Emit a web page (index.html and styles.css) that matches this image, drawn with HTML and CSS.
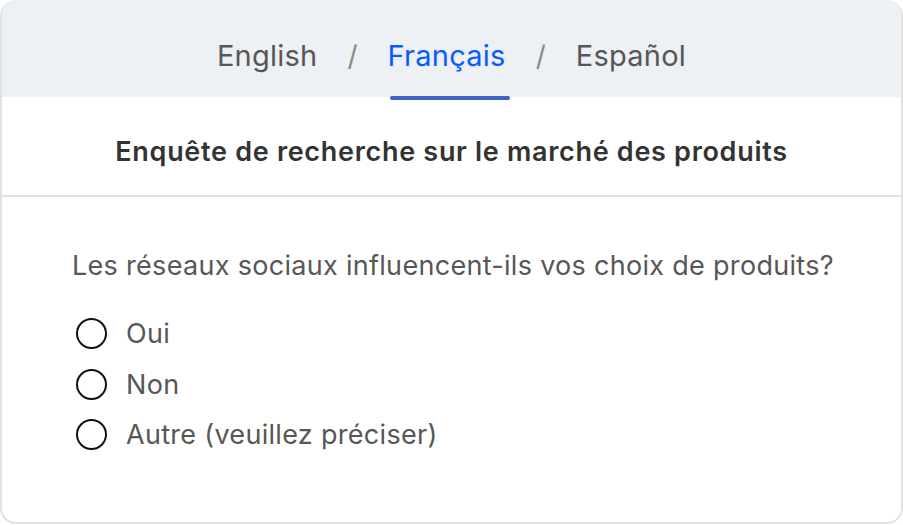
FILE: index.html
```html
<!DOCTYPE html>
<html lang="fr">
<head>
<meta charset="utf-8">
<title>Enquête</title>
<link rel="stylesheet" href="styles.css">
</head>
<body>
<div class="card">
  <nav class="langs">
    <span class="lang">English</span>
    <span class="sep">/</span>
    <span class="lang active">Français</span>
    <span class="sep">/</span>
    <span class="lang">Español</span>
  </nav>
  <h1 class="title">Enquête de recherche sur le marché des produits</h1>
  <section class="question">
    <p class="q-text">Les réseaux sociaux influencent-ils vos choix de produits?</p>
    <ul class="options">
      <li class="option"><span class="radio"></span>Oui</li>
      <li class="option"><span class="radio"></span>Non</li>
      <li class="option"><span class="radio"></span>Autre (veuillez préciser)</li>
    </ul>
  </section>
</div>
</body>
</html>
```
FILE: styles.css
```css
html, body {
  margin: 0;
  padding: 0;
  background: #ffffff;
}

body {
  font-family: Inter, "Noto Sans", sans-serif;
}

.card {
  box-sizing: border-box;
  width: 903px;
  height: 524px;
  border: 2px solid #e2e2e2;
  border-top: none;
  border-radius: 16px;
  overflow: hidden;
  background: #ffffff;
}

/* language switcher */
.langs {
  box-sizing: border-box;
  height: 97px;
  margin: 0 -2px;
  padding-top: 14px;
  background: #edf0f5;
  display: flex;
  justify-content: center;
  align-items: center;
  gap: 30px;
  font-size: 29px;
  color: #575757;
}

.lang {
  position: relative;
  line-height: 36px;
  letter-spacing: 0.25px;
}

.lang.active {
  color: #0a5bff;
}

.lang.active::after {
  content: "";
  position: absolute;
  left: 2px;
  right: -4px;
  bottom: -26px;
  height: 4px;
  border-radius: 2px;
  background: #3d63c7;
}

.sep {
  color: #8a8a8a;
  font-size: 28px;
  line-height: 36px;
}

/* survey title */
.title {
  box-sizing: border-box;
  margin: 0;
  height: 100px;
  padding-top: 10px;
  display: flex;
  align-items: center;
  justify-content: center;
  font-size: 27px;
  font-weight: 600;
  color: #333333;
  border-bottom: 2px solid #e2e2e2;
  letter-spacing: 0.7px;
  white-space: nowrap;
}

/* question block */
.question {
  padding: 53px 0 0 70px;
}

.q-text {
  margin: 0 0 35px;
  font-size: 27px;
  line-height: 32px;
  color: #575757;
  letter-spacing: 0.3px;
  white-space: nowrap;
}

.options {
  list-style: none;
  margin: 0;
  padding: 0 0 0 4px;
  display: flex;
  flex-direction: column;
  gap: 17.5px;
}

.option {
  display: flex;
  align-items: center;
  gap: 19px;
  font-size: 27px;
  height: 33px;
  color: #575757;
  letter-spacing: 0.3px;
  white-space: nowrap;
}

.radio {
  box-sizing: border-box;
  width: 31px;
  height: 31px;
  border: 2px solid #111111;
  border-radius: 50%;
  flex: none;
}
```
